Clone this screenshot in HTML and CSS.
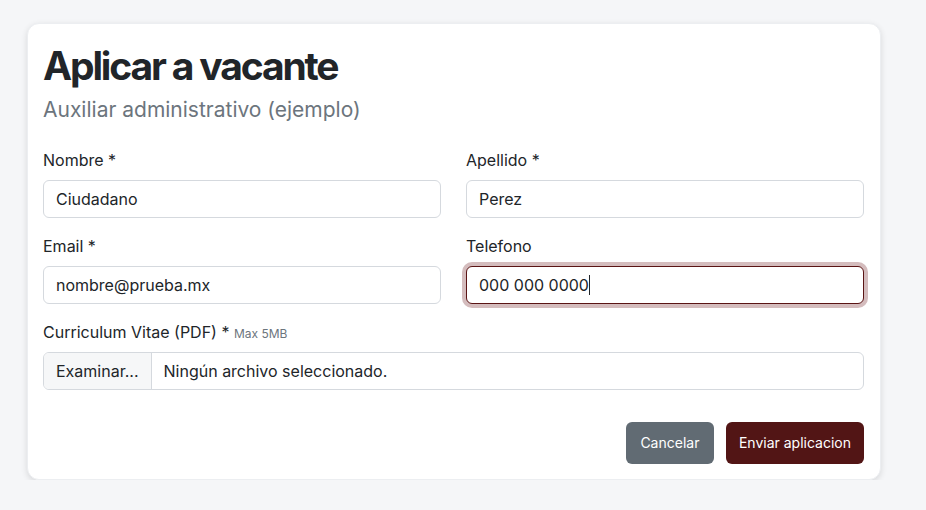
FILE: index.html
```html
<!DOCTYPE html>
<html lang="es">
<head>
<meta charset="utf-8">
<title>Aplicar a vacante</title>
<link rel="stylesheet" href="styles.css">
</head>
<body>
<main class="page">
  <section class="card">
    <h1 class="title">Aplicar a vacante</h1>
    <p class="subtitle">Auxiliar administrativo (ejemplo)</p>
    <form class="form">
      <div class="grid">
        <div class="field">
          <label class="label">Nombre *</label>
          <div class="input">Ciudadano</div>
        </div>
        <div class="field">
          <label class="label">Apellido *</label>
          <div class="input">Perez</div>
        </div>
        <div class="field">
          <label class="label">Email *</label>
          <div class="input">nombre@prueba.mx</div>
        </div>
        <div class="field">
          <label class="label">Telefono</label>
          <div class="input focused">000 000 0000<span class="caret"></span></div>
        </div>
      </div>
      <div class="field">
        <label class="label">Curriculum Vitae (PDF) * <small class="hint">Max 5MB</small></label>
        <div class="file">
          <span class="file-btn">Examinar...</span>
          <span class="file-name">Ningún archivo seleccionado.</span>
        </div>
      </div>
      <div class="actions">
        <button type="button" class="btn btn-cancel">Cancelar</button>
        <button type="button" class="btn btn-primary">Enviar aplicacion</button>
      </div>
    </form>
  </section>
</main>
</body>
</html>
```
FILE: styles.css
```css
* { box-sizing: border-box; }
html, body { margin: 0; padding: 0; }
body {
  background: #f5f6f8;
  font-family: Inter, "Liberation Sans", sans-serif;
  color: #212529;
  font-size: 16px;
  line-height: 1.5;
}
.page {
  padding: 23px 0 0 27px;
}
.card {
  width: 854px;
  background: #fff;
  border: 1px solid #eceef1;
  border-radius: 12px;
  box-shadow: 0 2px 6px rgba(0, 0, 0, 0.12);
  padding: 16px 16px 15px 15px;
}
.title {
  margin: 3px 0 0;
  font-size: 39px;
  font-weight: 700;
  letter-spacing: -0.055em;
  line-height: 1.2;
  color: #212529;
}
.subtitle {
  margin: 4px 0 0;
  font-size: 21px;
  color: #6c757d;
  line-height: 1.5;
}
.form { margin-top: 23px; }
.grid {
  display: grid;
  grid-template-columns: 1fr 1fr;
  column-gap: 25px;
}
.field { margin-bottom: 16px; }
.label {
  display: block;
  margin-bottom: 8px;
  font-size: 16px;
  line-height: 24px;
  color: #212529;
}
.hint {
  font-size: 12px;
  line-height: 1;
  color: #6c757d;
}
.input {
  height: 38px;
  border: 1px solid #d5d9de;
  border-radius: 6px;
  padding: 6px 12px;
  font-size: 16px;
  line-height: 24px;
  color: #212529;
  background: #fff;
}
.input.focused {
  border-color: #5a1414;
  box-shadow: 0 0 0 4px #d4bcbd;
}
.caret {
  display: inline-block;
  width: 1px;
  height: 20px;
  background: #212529;
  vertical-align: -4px;
}
.file {
  display: flex;
  height: 38px;
  border: 1px solid #d5d9de;
  border-radius: 6px;
  overflow: hidden;
}
.file-btn {
  display: flex;
  align-items: center;
  padding: 0 12px;
  background: #f6f7f8;
  border-right: 1px solid #d5d9de;
}
.file-name {
  display: flex;
  align-items: center;
  padding: 0 12px;
}
.actions {
  display: flex;
  justify-content: flex-end;
  gap: 12px;
  margin-top: 32px;
}
.btn {
  font-family: inherit;
  font-size: 14px;
  line-height: 24px;
  padding: 8px 12px;
  border: 1px solid transparent;
  border-radius: 6px;
  color: #fff;
  cursor: pointer;
}
.btn-cancel { background: #616b73; padding: 8px 13.5px; }
.btn-primary { background: #521515; }
```
